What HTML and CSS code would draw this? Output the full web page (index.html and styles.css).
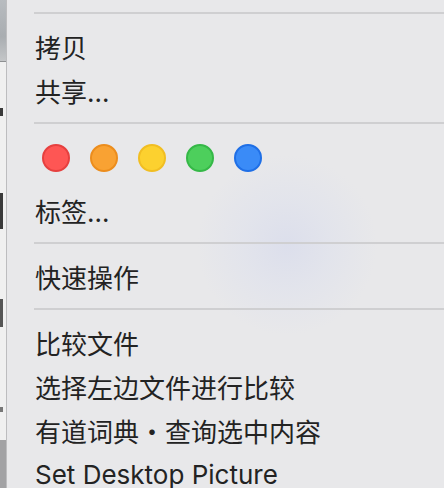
FILE: index.html
```html
<!DOCTYPE html>
<html lang="zh-CN">
<head>
<meta charset="utf-8">
<link rel="stylesheet" href="styles.css">
</head>
<body>
<div class="screen">
  <div class="strip">
    <div class="s-photo"></div>
    <div class="s-white">
      <div class="s-mark s-g"></div>
      <div class="s-mark s-a"></div>
      <div class="s-mark s-b"></div>
      <div class="s-mark s-c"></div>
    </div>
    <div class="s-gray"></div>
  </div>
  <div class="menu">
    <div class="sep"></div>
    <div class="item">拷贝</div>
    <div class="item">共享…</div>
    <div class="sep"></div>
    <div class="tags">
      <span class="dot red"></span>
      <span class="dot orange"></span>
      <span class="dot yellow"></span>
      <span class="dot green"></span>
      <span class="dot blue"></span>
    </div>
    <div class="item">标签…</div>
    <div class="sep"></div>
    <div class="item">快速操作</div>
    <div class="sep"></div>
    <div class="item">比较文件</div>
    <div class="item">选择左边文件进行比较</div>
    <div class="item">有道词典・查询选中内容</div>
    <div class="item">Set Desktop Picture</div>
  </div>
</div>
</body>
</html>
```
FILE: styles.css
```css
html, body {
  margin: 0;
  padding: 0;
  width: 444px;
  height: 488px;
  overflow: hidden;
}
.screen {
  display: flex;
  width: 444px;
  height: 488px;
}
.strip {
  width: 6px;
  flex: none;
  display: flex;
  flex-direction: column;
  border-right: 1px solid #bdbdbf;
}
.s-photo {
  height: 61px;
  background: linear-gradient(180deg, #b8bcc0 0%, #a9adb1 60%, #c4c6c8 100%);
  border-bottom: 1px solid #8e9092;
}
.s-white {
  flex: 1;
  background: #f0f0f0;
  display: flex;
  flex-direction: column;
}
.s-mark {
  background: #3a3a3a;
  width: 3px;
}
.s-g { height: 8px; margin-top: 46px; }
.s-a { height: 36px; margin-top: 77px; }
.s-b { height: 28px; margin-top: 70px; background: #555; }
.s-c { height: 5px; margin-top: 80px; background: #777; }
.s-gray {
  height: 48px;
  background: #a2a2a4;
}
.menu {
  flex: 1;
  padding-top: 2px;
  background:
    radial-gradient(circle at 280px 245px, rgba(218, 221, 236, 0.85) 0, rgba(222, 225, 237, 0.55) 45px, rgba(232, 232, 234, 0) 90px),
    #e8e8ea;
  display: flex;
  flex-direction: column;
  font-family: Inter, "Noto Sans CJK SC", sans-serif;
  color: #232323;
}
.sep {
  height: 22px;
  flex: none;
  display: flex;
  align-items: center;
  padding-left: 27px;
}
.sep::before {
  content: "";
  display: block;
  height: 2px;
  flex: 1;
  background: #cfcfd1;
}
.item {
  height: 44px;
  flex: none;
  display: flex;
  align-items: center;
  padding-left: 28px;
  font-size: 26px;
  white-space: nowrap;
}
.tags {
  height: 54px;
  flex: none;
  display: flex;
  gap: 20px;
  padding-left: 35px;
  padding-top: 10px;
  box-sizing: border-box;
}
.dot {
  width: 28px;
  height: 28px;
  border-radius: 50%;
  box-sizing: border-box;
  border: 2px solid;
}
.red { background: #fe5654; border-color: #e6403f; }
.orange { background: #f9a233; border-color: #ec8d1d; }
.yellow { background: #fcd12f; border-color: #f1be22; }
.green { background: #4dcf5c; border-color: #35b847; }
.blue { background: #3a8bf7; border-color: #1f6fe6; }
```
